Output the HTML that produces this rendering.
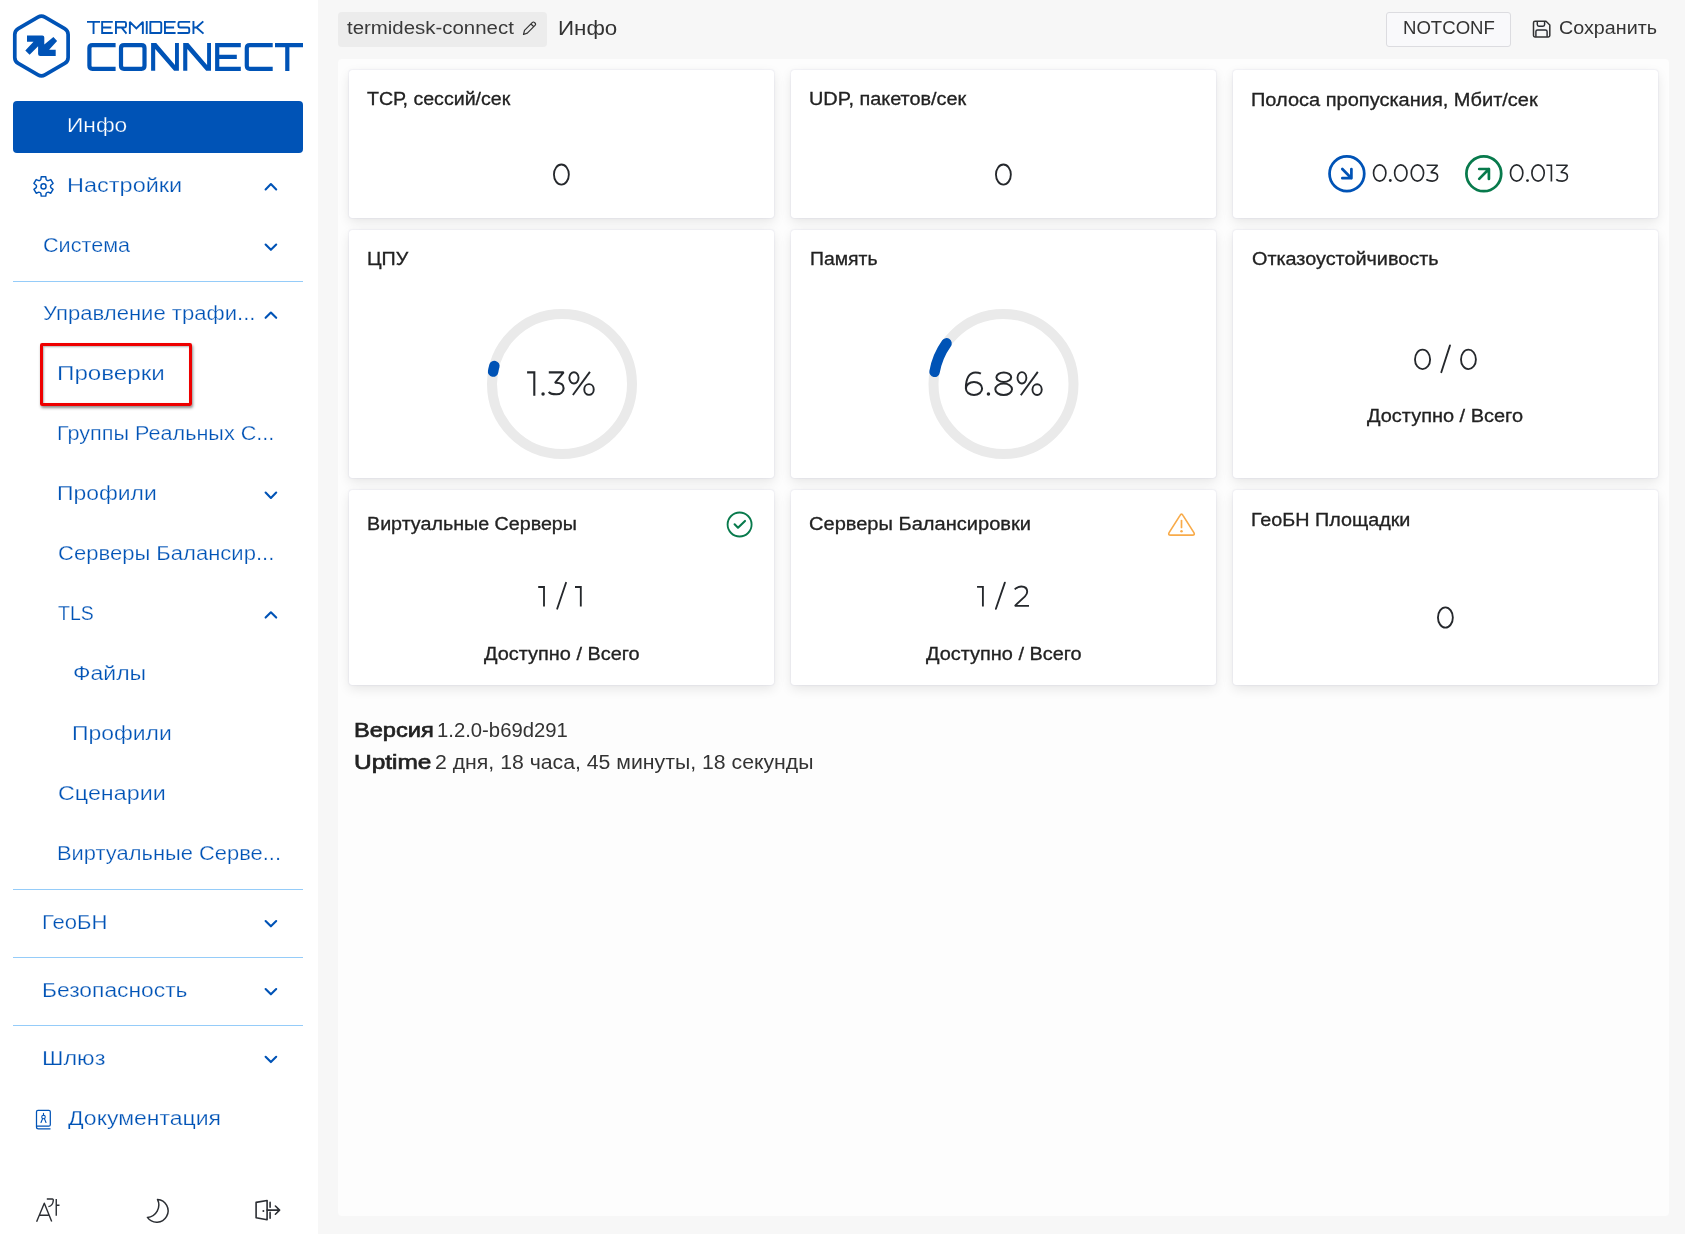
<!DOCTYPE html>
<html><head><meta charset="utf-8"><style>
*{margin:0;padding:0;box-sizing:border-box}
html,body{width:1685px;height:1234px;overflow:hidden}
body{font-family:"Liberation Sans",sans-serif;background:#f7f7f7;position:relative}
.t{position:absolute;line-height:0;white-space:nowrap}
.abs{position:absolute}
#side{position:absolute;left:0;top:0;width:318px;height:1234px;background:#fff}
#cont{position:absolute;left:338px;top:59px;width:1331px;height:1157px;background:#fdfdfd;border-radius:4px}
.card{position:absolute;background:#fff;border-radius:3px;box-shadow:0 0 1.5px 0 rgba(60,60,140,0.22),0 4px 12px rgba(0,0,0,0.095)}
.div{position:absolute;left:13px;width:290px;height:1px;background:#95ccf9}
svg{position:absolute;overflow:visible}
</style></head><body>
<div id="side"></div>
<div class="abs" style="left:13px;top:101px;width:290px;height:52px;background:#0053b6;border-radius:4px"></div>

<svg style="left:0;top:0" width="320" height="90">
<path d="M37.99 17.20 Q41.45 15.20 44.91 17.20 L64.66 28.60 Q68.12 30.60 68.12 34.60 L68.12 57.40 Q68.12 61.40 64.66 63.40 L44.91 74.80 Q41.45 76.80 37.99 74.80 L18.24 63.40 Q14.78 61.40 14.78 57.40 L14.78 34.60 Q14.78 30.60 18.24 28.60 Z" fill="none" stroke="#0053b6" stroke-width="3.7" stroke-linejoin="round"/>
<path d="M27 35.5 L42.3 35.5 Q44.3 35.5 44.3 37.5 L44.3 44.6 L53.4 36.9 L57.1 40.9 L49.1 49.7 L55.7 49.7 L55.7 55.9 L40.1 55.9 Q38.1 55.9 38.1 53.9 L38.1 46.3 L29.6 54.8 L25.3 50.6 L33.5 41.8 L27 41.8 Z" fill="#0053b6"/>
</svg>
<svg style="left:0;top:0" width="320" height="90"><path d="M87 21.85 H100.1 M93.55 21.85 V34.0 M112.8 21.85 H102.15 V33.05 H112.8 M102.15 27.5 H111.3 M115.95 34.0 V21.85 H124.5 Q126 21.85 126 23.35 V26.0 Q126 27.5 124.5 27.5 H115.95 M121.5 27.5 L126.5 33.65 M129.85 34.0 V21.85 L136.35 28.5 L142.85 21.85 V34.0 M146.75 20.900000000000002 V34.0 M150.35 21.85 H159.7 Q161.25 21.85 161.25 23.450000000000003 V31.449999999999996 Q161.25 33.05 159.7 33.05 H150.35 Z M175.6 21.85 H164.95 V33.05 H175.6 M164.95 27.5 H174.1 M190.2 21.85 H179.8 Q178.45 21.85 178.45 23.25 V26.1 Q178.45 27.5 179.8 27.5 H187.9 Q189.25 27.5 189.25 28.9 V31.65 Q189.25 33.05 187.9 33.05 H177.5 M193.45 20.900000000000002 V34.0 M193.45 27.5 H196.5 L203.3 21.35 M196.5 27.5 L203.5 33.65" fill="none" stroke="#0053b6" stroke-width="1.9" stroke-miterlimit="1.5"/><path d="M115.6 45.1 H92.39999999999999 Q89.39999999999999 45.1 89.39999999999999 48.1 V65.80000000000001 Q89.39999999999999 68.80000000000001 92.39999999999999 68.80000000000001 H115.6 M124.0 45.1 H141.5 Q144.5 45.1 144.5 48.1 V65.80000000000001 Q144.5 68.80000000000001 141.5 68.80000000000001 H124.0 Q121.0 68.80000000000001 121.0 65.80000000000001 V48.1 Q121.0 45.1 124.0 45.1 Z M240.8 45.1 H217.2 V68.80000000000001 H240.8 M217.2 56.8 H236.8 M272.7 45.1 H249.79999999999998 Q246.79999999999998 45.1 246.79999999999998 48.1 V65.80000000000001 Q246.79999999999998 68.80000000000001 249.79999999999998 68.80000000000001 H272.7 M275 45.1 H303 M287.3 45.1 V70.9" fill="none" stroke="#0053b6" stroke-width="4.2" stroke-linejoin="miter"/><path d="M151.10 43.10 L156.20 43.10 L175.00 65.10 L175.00 43.10 L178.90 43.10 L178.90 70.80 L174.10 70.80 L155.20 49.00 L155.20 70.80 L151.10 70.80 Z" fill="#0053b6"/><path d="M183.20 43.10 L188.30 43.10 L207.10 65.10 L207.10 43.10 L211.00 43.10 L211.00 70.80 L206.20 70.80 L187.30 49.00 L187.30 70.80 L183.20 70.80 Z" fill="#0053b6"/></svg>
<div class="div" style="top:281px"></div><div class="div" style="top:889px"></div><div class="div" style="top:957px"></div><div class="div" style="top:1025px"></div>
<svg style="left:0;top:0" width="320" height="1234">
<path d="M265.6 189.4 L270.90000000000003 184.1 L276.20000000000005 189.4" fill="none" stroke="#0053b6" stroke-width="2.1" stroke-linecap="round" stroke-linejoin="round"/><path d="M265.6 244.5 L270.90000000000003 249.8 L276.20000000000005 244.5" fill="none" stroke="#0053b6" stroke-width="2.1" stroke-linecap="round" stroke-linejoin="round"/><path d="M265.6 317.79999999999995 L270.90000000000003 312.5 L276.20000000000005 317.79999999999995" fill="none" stroke="#0053b6" stroke-width="2.1" stroke-linecap="round" stroke-linejoin="round"/><path d="M265.6 492.6 L270.90000000000003 497.90000000000003 L276.20000000000005 492.6" fill="none" stroke="#0053b6" stroke-width="2.1" stroke-linecap="round" stroke-linejoin="round"/><path d="M265.6 617.6 L270.90000000000003 612.3000000000001 L276.20000000000005 617.6" fill="none" stroke="#0053b6" stroke-width="2.1" stroke-linecap="round" stroke-linejoin="round"/><path d="M265.6 921.0 L270.90000000000003 926.3 L276.20000000000005 921.0" fill="none" stroke="#0053b6" stroke-width="2.1" stroke-linecap="round" stroke-linejoin="round"/><path d="M265.6 989.0 L270.90000000000003 994.3 L276.20000000000005 989.0" fill="none" stroke="#0053b6" stroke-width="2.1" stroke-linecap="round" stroke-linejoin="round"/><path d="M265.6 1056.8 L270.90000000000003 1062.1 L276.20000000000005 1056.8" fill="none" stroke="#0053b6" stroke-width="2.1" stroke-linecap="round" stroke-linejoin="round"/>
<path d="M40.85 179.49 L41.25 176.66 L45.75 176.66 L46.15 179.49 Q46.80 180.68 48.16 180.65 L50.81 179.58 L53.06 183.48 L50.81 185.24 Q50.10 186.40 50.81 187.56 L53.06 189.32 L50.81 193.22 L48.16 192.15 Q46.80 192.12 46.15 193.31 L45.75 196.14 L41.25 196.14 L40.85 193.31 Q40.20 192.12 38.84 192.15 L36.19 193.22 L33.94 189.32 L36.19 187.56 Q36.90 186.40 36.19 185.24 L33.94 183.48 L36.19 179.58 L38.84 180.65 Q40.20 180.68 40.85 179.49 Z" fill="none" stroke="#0053b6" stroke-width="1.45" stroke-linejoin="round"/><circle cx="43.5" cy="186.4" r="2.55" fill="none" stroke="#0053b6" stroke-width="1.45"/>
<path d="M36.5 1126.2 V1111.8 Q36.5 1110.3 38 1110.3 H48.8 Q50.3 1110.3 50.3 1111.8 V1124.7 Q50.3 1126.2 48.8 1126.2 H36.5 V1127 Q36.5 1128.9 38.5 1128.9 H50.5" fill="none" stroke="#0053b6" stroke-width="1.25"/>
<circle cx="43.5" cy="1117" r="1.75" fill="none" stroke="#0053b6" stroke-width="1.1"/>
<path d="M43.5 1113.2 V1115.2 M42.6 1118.6 L41 1122.5 M44.4 1118.6 L46 1122.5" fill="none" stroke="#0053b6" stroke-width="1.15" stroke-linecap="round"/>
</svg>
<svg style="left:0;top:0" width="320" height="1234">
<path d="M36.6 1221.8 L44.3 1203.2 L51.7 1221.6 M39.6 1215.3 H48.5" fill="none" stroke="#2b2e33" stroke-width="1.4" stroke-linejoin="round"/>
<path d="M46.8 1199 H52.3 Q53.4 1199 53.3 1200.5 Q52.8 1206 48.4 1206.6 M56.25 1199 V1215.8 M56.25 1205.3 H59.5" fill="none" stroke="#2b2e33" stroke-width="1.4"/>
<path d="M157.5 1199.4 A11.4 11.4 0 1 1 147.4 1217.4 A12.5 12.5 0 0 0 157.5 1199.4 Z" fill="none" stroke="#2b2e33" stroke-width="1.5" stroke-linejoin="round"/>
<path d="M256.1 1202.4 L267.1 1200.5 V1219.7 L256.1 1217.7 Z" fill="none" stroke="#2b2e33" stroke-width="1.6" stroke-linejoin="round"/>
<path d="M270.1 1202.4 V1207.3 M270.1 1212.4 V1218.3" fill="none" stroke="#2b2e33" stroke-width="1.6" stroke-linecap="round"/>
<path d="M267.1 1210.1 H279.6 M275.4 1206 L279.6 1210.1 L275.4 1214.2" fill="none" stroke="#2b2e33" stroke-width="1.6" stroke-linecap="round" stroke-linejoin="round"/>
<circle cx="263.4" cy="1211.1" r="1" fill="#2b2e33"/>
</svg>
<div class="abs" style="left:39.5px;top:342.5px;width:152px;height:63.5px;border:3px solid #ee0000;border-radius:2px;box-shadow:1px 2px 3px rgba(0,0,0,0.45), inset 1px 1px 2px rgba(0,0,0,0.3)"></div>
<div id="cont"></div>
<div class="card" style="left:349px;top:70px;width:425px;height:148px"></div><div class="card" style="left:791px;top:70px;width:425px;height:148px"></div><div class="card" style="left:1233px;top:70px;width:425px;height:148px"></div><div class="card" style="left:349px;top:230px;width:425px;height:248px"></div><div class="card" style="left:791px;top:230px;width:425px;height:248px"></div><div class="card" style="left:1233px;top:230px;width:425px;height:248px"></div><div class="card" style="left:349px;top:490px;width:425px;height:195px"></div><div class="card" style="left:791px;top:490px;width:425px;height:195px"></div><div class="card" style="left:1233px;top:490px;width:425px;height:195px"></div>

<div class="abs" style="left:338px;top:12px;width:209px;height:34.5px;background:#ececec;border-radius:4px"></div>
<div class="abs" style="left:1386px;top:12px;width:125px;height:34.5px;background:#f9f9fb;border:1px solid #dcdce0;border-radius:3px"></div>
<svg style="left:0;top:0" width="1685" height="60">
<path d="M523.5 34.5 L524.5 30.3 L532.2 22.6 Q533.4 21.4 534.6 22.6 L535 23 Q536.2 24.2 535 25.4 L527.3 33.1 L523.5 34.5 Z M531 24 L534 27" fill="none" stroke="#333" stroke-width="1.2" stroke-linejoin="round"/>
<path d="M1535 21.3 H1546 L1549.8 25 V35.5 Q1549.8 36.9 1548.4 36.9 H1534.9 Q1533.5 36.9 1533.5 35.5 V22.7 Q1533.5 21.3 1535 21.3 Z" fill="none" stroke="#333" stroke-width="1.5" stroke-linejoin="round"/>
<path d="M1537.3 21.5 V24.6 Q1537.3 26.2 1538.9 26.2 H1543 Q1544.6 26.2 1544.6 24.6 V21.5 M1535.9 36.8 V31.6 Q1535.9 29.9 1537.6 29.9 H1545.4 Q1547.1 29.9 1547.1 31.6 V36.8" fill="none" stroke="#2b2e33" stroke-width="1.45" stroke-linejoin="round"/>
</svg>

<svg style="left:0;top:0" width="1685" height="1234">
<circle cx="562" cy="384" r="70" fill="none" stroke="#eaeaea" stroke-width="10"/>
<path d="M493.11 371.60 A70 70 0 0 1 494.35 366.00" fill="none" stroke="#0053b6" stroke-width="10.5" stroke-linecap="round"/>
<circle cx="1003.5" cy="384" r="70" fill="none" stroke="#eaeaea" stroke-width="10"/>
<path d="M934.56 371.84 A70 70 0 0 1 946.51 343.35" fill="none" stroke="#0053b6" stroke-width="10.5" stroke-linecap="round"/>
<circle cx="1346.9" cy="173.8" r="17.35" fill="none" stroke="#0053b6" stroke-width="2.75"/>
<path d="M1342.3 169 L1351.4 178.2 M1351.4 169 V178.2 H1342.3" fill="none" stroke="#0053b6" stroke-width="2.7" stroke-linecap="round" stroke-linejoin="round"/>
<circle cx="1483.8" cy="173.8" r="17.4" fill="none" stroke="#087a4c" stroke-width="2.75"/>
<path d="M1479.2 178.9 L1488.9 169 M1479.2 169 H1488.9 V178.9" fill="none" stroke="#087a4c" stroke-width="2.7" stroke-linecap="round" stroke-linejoin="round"/>
<g fill="none" stroke="#25282c" stroke-width="1.85" stroke-miterlimit="1.6">
<ellipse cx="561.4" cy="174.55" rx="7.45" ry="10.05"/>
<ellipse cx="1003.4" cy="174.55" rx="7.45" ry="10.05"/>
<ellipse cx="1445.4" cy="617.5" rx="7.45" ry="10.1"/>
<ellipse cx="1422.55" cy="359.4" rx="7.55" ry="9.7"/>
<ellipse cx="1468.45" cy="359.4" rx="7.45" ry="9.7"/>
<path d="M1441.3 372.2 L1450.0 345.4" stroke-linecap="round"/>
<path d="M538.2 587 H544 V606.6 M575 587 H580.8 V606.6 M977.05 586.9 H982.9 V606.6" />
<path d="M557.2 608.7 L566.0 582.8 M995.9 608.8 L1004.85 582.6" stroke-linecap="round"/>
<path d="M1014.7 589.4 Q1017.6 586.5 1021.3 586.5 Q1027.2 586.6 1027.2 591.8 Q1027.2 594.2 1025 596.3 L1014.9 605.8 H1029"/>
</g>
<circle cx="739.6" cy="524.5" r="12" fill="none" stroke="#087a4c" stroke-width="1.85"/>
<path d="M734.6 524.3 L738 527.7 L745 520.9" fill="none" stroke="#087a4c" stroke-width="2.1" stroke-linecap="round" stroke-linejoin="round"/>
<path d="M1179.9 515.6 Q1181.5 512.6 1183.1 515.6 L1193.9 532.6 Q1195.2 535.1 1192.4 535.1 H1170.6 Q1167.8 535.1 1169.1 532.6 Z" fill="none" stroke="#f8ab4a" stroke-width="1.65" stroke-linejoin="round"/>
<path d="M1181.5 520.6 V527.4" stroke="#f8ab4a" stroke-width="1.7" stroke-linecap="round"/>
<circle cx="1181.5" cy="531.2" r="1.25" fill="#f8ab4a"/>
</svg>
<svg style="left:0;top:0" width="1685" height="1234">
<g fill="none" stroke="#25282c" stroke-miterlimit="1.6">
 <g stroke-width="2.1">
  <path d="M527.1 372.4 H534.3 V395.8"/>
  <path d="M548.8 372.4 H563.6 L555.0 382.8 C561.45 382.60 563.60 384.68 563.60 388.18 C563.60 391.94 560.40 394.25 556.50 394.25 C552.26 394.25 549.60 393.19 548.8 391.9"/>
 </g>
 <g stroke-width="1.9">
  <ellipse cx="573.95" cy="377.85" rx="4.6" ry="5.6"/>
  <ellipse cx="589" cy="389.5" rx="4.75" ry="5.35"/>
  <path d="M572.9 395.0 L589.9 371.9"/>
 </g>
 <g stroke-width="2.0">
  <ellipse cx="974" cy="388.5" rx="8.1" ry="6.5"/>
  <path d="M965.9 388.6 C965.7 377.8 969.6 372.4 975.4 372.4 C977.6 372.4 979.4 372.8 980.9 373.6"/>
  <ellipse cx="1003.8" cy="377.15" rx="7.4" ry="4.75"/>
  <ellipse cx="1003.65" cy="389.3" rx="8.35" ry="5.7"/>
 </g>
 <g stroke-width="1.9">
  <ellipse cx="1021.95" cy="377.8" rx="4.45" ry="5.7"/>
  <ellipse cx="1037.1" cy="389.6" rx="4.65" ry="5.4"/>
  <path d="M1020.8 395.2 L1037.8 371.9"/>
 </g>
 <g stroke-width="1.65">
  <ellipse cx="1379.7" cy="173" rx="6.17" ry="8.07"/>
  <ellipse cx="1400.8" cy="173" rx="6.17" ry="8.07"/>
  <ellipse cx="1417.4" cy="173" rx="6.17" ry="8.07"/>
  <path d="M1426.6 165.2 H1437.5 L1430.9 172.6 C1435.92 172.40 1437.60 174.00 1437.60 176.59 C1437.60 179.39 1435.21 181.10 1432.30 181.10 C1429.06 181.10 1427.20 180.29 1426.4 179.3"/>
  <ellipse cx="1516.65" cy="173" rx="6.17" ry="8.07"/>
  <ellipse cx="1538.05" cy="173" rx="6.17" ry="8.07"/>
  <path d="M1546.4 165.2 H1551.4 V181.6"/>
  <path d="M1556.1 165.2 H1567.4 L1560.9 172.5 C1565.78 172.30 1567.40 173.91 1567.40 176.54 C1567.40 179.37 1565.04 181.10 1562.15 181.10 C1558.93 181.10 1557.10 180.25 1556.3 179.2"/>
 </g>
</g>
<g fill="#25282c">
 <circle cx="543.06" cy="394.0" r="1.75"/>
 <circle cx="988.45" cy="394.1" r="1.75"/>
 <circle cx="1390.3" cy="180.5" r="1.4"/>
 <circle cx="1527.5" cy="180.6" r="1.4"/>
</g>
</svg>
<div class="t" style="left:66.71px;top:125px;font-size:20px;font-weight:400;letter-spacing:-0.0px;color:#ffffff;-webkit-text-stroke:0.25px #0053b6;transform:scaleX(1.1366) translateZ(0);transform-origin:0 0;">Инфо</div><div class="t" style="left:67.03px;top:185px;font-size:20px;font-weight:400;letter-spacing:0.0px;color:#0053b6;-webkit-text-stroke:0.25px #fff;transform:scaleX(1.1752) translateZ(0);transform-origin:0 0;">Настройки</div><div class="t" style="left:42.55px;top:245px;font-size:20px;font-weight:400;letter-spacing:0.0px;color:#0053b6;-webkit-text-stroke:0.25px #fff;transform:scaleX(1.0811) translateZ(0);transform-origin:0 0;">Система</div><div class="t" style="left:42.72px;top:313px;font-size:20px;font-weight:400;letter-spacing:0.0px;color:#0053b6;-webkit-text-stroke:0.25px #fff;transform:scaleX(1.1038) translateZ(0);transform-origin:0 0;">Управление трафи...</div><div class="t" style="left:56.86px;top:373px;font-size:20px;font-weight:400;letter-spacing:0.0px;color:#0053b6;-webkit-text-stroke:0.25px #fff;transform:scaleX(1.2087) translateZ(0);transform-origin:0 0;">Проверки</div><div class="t" style="left:57.12px;top:433px;font-size:20px;font-weight:400;letter-spacing:0.0px;color:#0053b6;-webkit-text-stroke:0.25px #fff;transform:scaleX(1.0809) translateZ(0);transform-origin:0 0;">Группы Реальных С...</div><div class="t" style="left:56.99px;top:493px;font-size:20px;font-weight:400;letter-spacing:0.0px;color:#0053b6;-webkit-text-stroke:0.25px #fff;transform:scaleX(1.1456) translateZ(0);transform-origin:0 0;">Профили</div><div class="t" style="left:57.63px;top:553px;font-size:20px;font-weight:400;letter-spacing:0.0px;color:#0053b6;-webkit-text-stroke:0.25px #fff;transform:scaleX(1.1017) translateZ(0);transform-origin:0 0;">Серверы Балансир...</div><div class="t" style="left:57.71px;top:613px;font-size:20px;font-weight:400;letter-spacing:0.0px;color:#0053b6;-webkit-text-stroke:0.25px #fff;transform:scaleX(0.9745) translateZ(0);transform-origin:0 0;">TLS</div><div class="t" style="left:72.56px;top:673px;font-size:20px;font-weight:400;letter-spacing:-0.0px;color:#0053b6;-webkit-text-stroke:0.25px #fff;transform:scaleX(1.1509) translateZ(0);transform-origin:0 0;">Файлы</div><div class="t" style="left:72.09px;top:733px;font-size:20px;font-weight:400;letter-spacing:0.0px;color:#0053b6;-webkit-text-stroke:0.25px #fff;transform:scaleX(1.1456) translateZ(0);transform-origin:0 0;">Профили</div><div class="t" style="left:57.55px;top:793px;font-size:20px;font-weight:400;letter-spacing:0.0px;color:#0053b6;-webkit-text-stroke:0.25px #fff;transform:scaleX(1.1651) translateZ(0);transform-origin:0 0;">Сценарии</div><div class="t" style="left:57.09px;top:853px;font-size:20px;font-weight:400;letter-spacing:0.0px;color:#0053b6;-webkit-text-stroke:0.25px #fff;transform:scaleX(1.0953) translateZ(0);transform-origin:0 0;">Виртуальные Серве...</div><div class="t" style="left:42.08px;top:922px;font-size:20px;font-weight:400;letter-spacing:0.0px;color:#0053b6;-webkit-text-stroke:0.25px #fff;transform:scaleX(1.1021) translateZ(0);transform-origin:0 0;">ГеоБН</div><div class="t" style="left:42.0px;top:990px;font-size:20px;font-weight:400;letter-spacing:0.0px;color:#0053b6;-webkit-text-stroke:0.25px #fff;transform:scaleX(1.1403) translateZ(0);transform-origin:0 0;">Безопасность</div><div class="t" style="left:41.84px;top:1058px;font-size:20px;font-weight:400;letter-spacing:0.0px;color:#0053b6;-webkit-text-stroke:0.25px #fff;transform:scaleX(1.1704) translateZ(0);transform-origin:0 0;">Шлюз</div><div class="t" style="left:67.85px;top:1118px;font-size:20px;font-weight:400;letter-spacing:0.0px;color:#0053b6;-webkit-text-stroke:0.25px #fff;transform:scaleX(1.1503) translateZ(0);transform-origin:0 0;">Документация</div><div class="t" style="left:347.02px;top:28px;font-size:17.5px;font-weight:400;letter-spacing:0.0px;color:#3a3a3a;transform:scaleX(1.1667) translateZ(0);transform-origin:0 0;">termidesk-connect</div><div class="t" style="left:558.15px;top:28px;font-size:20px;font-weight:400;letter-spacing:0.0px;color:#333333;transform:scaleX(1.1186) translateZ(0);transform-origin:0 0;">Инфо</div><div class="t" style="left:1402.53px;top:28px;font-size:17.5px;font-weight:400;letter-spacing:0.0px;color:#333333;transform:scaleX(1.0616) translateZ(0);transform-origin:0 0;">NOTCONF</div><div class="t" style="left:1559.47px;top:28px;font-size:17.5px;font-weight:400;letter-spacing:0.0px;color:#333333;transform:scaleX(1.1264) translateZ(0);transform-origin:0 0;">Сохранить</div><div class="t" style="left:366.91px;top:99px;font-size:18px;font-weight:400;letter-spacing:0.0px;color:#222222;-webkit-text-stroke:0.3px currentColor;transform:scaleX(1.0888) translateZ(0);transform-origin:0 0;">ТСР, сессий/сек</div><div class="t" style="left:809.11px;top:99px;font-size:18px;font-weight:400;letter-spacing:0.0px;color:#222222;-webkit-text-stroke:0.3px currentColor;transform:scaleX(1.1037) translateZ(0);transform-origin:0 0;">UDP, пакетов/сек</div><div class="t" style="left:1250.74px;top:100px;font-size:18px;font-weight:400;letter-spacing:0.0px;color:#222222;-webkit-text-stroke:0.3px currentColor;transform:scaleX(1.1108) translateZ(0);transform-origin:0 0;">Полоса пропускания, Мбит/сек</div><div class="t" style="left:367.25px;top:259px;font-size:18px;font-weight:400;letter-spacing:0.0px;color:#222222;-webkit-text-stroke:0.3px currentColor;transform:scaleX(1.0948) translateZ(0);transform-origin:0 0;">ЦПУ</div><div class="t" style="left:809.69px;top:259px;font-size:18px;font-weight:400;letter-spacing:0.0px;color:#222222;-webkit-text-stroke:0.3px currentColor;transform:scaleX(1.0772) translateZ(0);transform-origin:0 0;">Память</div><div class="t" style="left:1252.11px;top:259px;font-size:18px;font-weight:400;letter-spacing:0.0px;color:#222222;-webkit-text-stroke:0.3px currentColor;transform:scaleX(1.1004) translateZ(0);transform-origin:0 0;">Отказоустойчивость</div><div class="t" style="left:367.05px;top:524px;font-size:18px;font-weight:400;letter-spacing:0.0px;color:#222222;-webkit-text-stroke:0.3px currentColor;transform:scaleX(1.0933) translateZ(0);transform-origin:0 0;">Виртуальные Серверы</div><div class="t" style="left:808.76px;top:524px;font-size:18px;font-weight:400;letter-spacing:0.0px;color:#222222;-webkit-text-stroke:0.3px currentColor;transform:scaleX(1.1141) translateZ(0);transform-origin:0 0;">Серверы Балансировки</div><div class="t" style="left:1251.35px;top:520px;font-size:18px;font-weight:400;letter-spacing:0.0px;color:#222222;-webkit-text-stroke:0.3px currentColor;transform:scaleX(1.0972) translateZ(0);transform-origin:0 0;">ГеоБН Площадки</div><div class="t" style="left:1367.36px;top:416px;font-size:18px;font-weight:400;letter-spacing:0.0px;color:#222222;-webkit-text-stroke:0.3px currentColor;transform:scaleX(1.1082) translateZ(0);transform-origin:0 0;">Доступно / Всего</div><div class="t" style="left:483.66px;top:654px;font-size:18px;font-weight:400;letter-spacing:0.0px;color:#222222;-webkit-text-stroke:0.3px currentColor;transform:scaleX(1.106) translateZ(0);transform-origin:0 0;">Доступно / Всего</div><div class="t" style="left:925.66px;top:654px;font-size:18px;font-weight:400;letter-spacing:0.0px;color:#222222;-webkit-text-stroke:0.3px currentColor;transform:scaleX(1.106) translateZ(0);transform-origin:0 0;">Доступно / Всего</div><div class="t" style="left:354.32px;top:730px;font-size:20px;font-weight:400;letter-spacing:0.0px;color:#222222;-webkit-text-stroke:0.65px currentColor;transform:scaleX(1.1803) translateZ(0);transform-origin:0 0;">Версия</div><div class="t" style="left:436.71px;top:730px;font-size:20px;font-weight:400;letter-spacing:0.0px;color:#333333;transform:scaleX(1.0142) translateZ(0);transform-origin:0 0;">1.2.0-b69d291</div><div class="t" style="left:354.37px;top:762px;font-size:20px;font-weight:400;letter-spacing:0.0px;color:#222222;-webkit-text-stroke:0.65px currentColor;transform:scaleX(1.2222) translateZ(0);transform-origin:0 0;">Uptime</div><div class="t" style="left:435.0px;top:762px;font-size:20px;font-weight:400;letter-spacing:0.0px;color:#333333;transform:scaleX(1.0622) translateZ(0);transform-origin:0 0;">2 дня, 18 часа, 45 минуты, 18 секунды</div>
</body></html>
